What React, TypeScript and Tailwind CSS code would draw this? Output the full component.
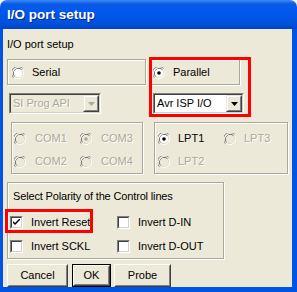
import type { ReactNode } from 'react';

const disabledText = 'text-[#aca899] [text-shadow:1px_1px_0_#fff]';

function Radio({ checked = false, disabled = false }: { checked?: boolean; disabled?: boolean }) {
  return (
    <svg width="12" height="12" viewBox="0 0 12 12" className="shrink-0">
      <circle cx="6" cy="6" r="5.5" fill="none" stroke="#ffffff" strokeWidth="1" />
      <path d="M10.6 1.4 A6.5 6.5 0 0 0 1.4 10.6" fill="none" stroke="#808080" strokeWidth="1" />
      <path d="M9.5 2.5 A5 5 0 0 0 2.5 9.5" fill="none" stroke="#404040" strokeWidth="1" />
      <path d="M2.5 9.5 A5 5 0 0 0 9.5 2.5" fill="none" stroke="#d4d0c8" strokeWidth="1" />
      <circle cx="6" cy="6" r="4.3" fill={disabled ? '#ece9d8' : '#ffffff'} />
      {checked && <circle cx="6" cy="6" r="1.8" fill={disabled ? '#aca899' : '#000000'} />}
    </svg>
  );
}

function Checkbox({ checked = false }: { checked?: boolean }) {
  return (
    <div className="w-[13px] h-[13px] shrink-0 border border-t-[#808080] border-l-[#808080] border-b-white border-r-white">
      <div className="w-full h-full border border-t-[#404040] border-l-[#404040] border-b-[#d4d0c8] border-r-[#d4d0c8] bg-white flex items-center justify-center">
        {checked && (
          <svg width="7" height="7" viewBox="0 0 7 7">
            <path d="M0 2 L0 4 L2 6 L7 1 L7 -1 L2 4 Z" fill="#000" />
          </svg>
        )}
      </div>
    </div>
  );
}

function Group({ className, children }: { className: string; children?: ReactNode }) {
  return (
    <div className={`border border-[#aca899] shadow-[inset_1px_1px_0_#fff,1px_1px_0_#fff] ${className}`}>
      {children}
    </div>
  );
}

function Combo({ value, disabled = false, className }: { value: string; disabled?: boolean; className: string }) {
  return (
    <div className={`h-[21px] border border-t-[#808080] border-l-[#808080] border-b-white border-r-white ${className}`}>
      <div
        className={`h-full flex items-center border border-t-[#404040] border-l-[#404040] border-b-[#d4d0c8] border-r-[#d4d0c8] ${
          disabled ? 'bg-[#ece9d8]' : 'bg-white'
        }`}
      >
        <span className={`flex-1 pl-[2px] leading-[13px] ${disabled ? disabledText : 'text-black'}`}>{value}</span>
        <div className="w-[16px] h-[17px] border border-t-[#ece9d8] border-l-[#ece9d8] border-b-[#404040] border-r-[#404040] bg-[#ece9d8]">
          <div className="w-full h-full border border-t-white border-l-white border-b-[#808080] border-r-[#808080] flex items-center justify-center">
            <svg width="7" height="4" viewBox="0 0 7 4">
              <path d="M0 0 H7 L3.5 4 Z" fill={disabled ? '#aca899' : '#000'} />
            </svg>
          </div>
        </div>
      </div>
    </div>
  );
}

function Button({ label, className, isDefault = false }: { label: string; className: string; isDefault?: boolean }) {
  return (
    <div className={`h-[23px] bg-[#ece9d8] ${isDefault ? 'border border-black' : ''} ${className}`}>
      <div className="h-full border border-t-white border-l-white border-b-[#404040] border-r-[#404040]">
        <div className="h-full flex items-center justify-center border border-t-[#ece9d8] border-l-[#ece9d8] border-b-[#808080] border-r-[#808080] text-black text-[11px]">
          {label}
        </div>
      </div>
    </div>
  );
}

export default function App() {
  return (
    <div className="w-[297px] h-[292px] bg-[#f4f3ee] relative font-['Liberation_Sans',Arial,sans-serif] text-[11px] text-black">
      {/* title bar */}
      <div className="h-[29px] rounded-t-[7px] bg-[linear-gradient(to_bottom,#3b8cf7_0px,#0a5ae6_4px,#0058ee_12px,#0053e0_22px,#0046c8_29px)] flex items-center pl-[7px]">
        <span className="font-bold text-[13.5px] text-white [text-shadow:1px_1px_0_#0a2a8a] pt-[1px]">
          I/O port setup
        </span>
      </div>

      {/* client */}
      <div className="h-[263px] bg-[#ece9d8] border-l-[3px] border-r-[5px] border-b-[5px] border-[#0054e3]">
        <div className="pt-[9px] pl-[4px] leading-[13px]">I/O port setup</div>

        <div className="flex mt-[8px]">
          <div className="ml-[4px] w-[139px]">
            <Group className="h-[26px] flex items-center pl-[4px] pt-[1px]">
              <Radio />
              <span className="ml-[8px]">Serial</span>
            </Group>
            <Combo value="SI Prog API" disabled className="ml-[2px] mt-[8px] w-[92px]" />
          </div>
          <div className="ml-[4px]">
            <Group className="w-[90px] h-[26px] flex items-center pl-[2px] pt-[1px]">
              <Radio checked />
              <span className="ml-[8px]">Parallel</span>
            </Group>
            <Combo value="Avr ISP I/O" className="ml-[3px] mt-[8px] w-[91px]" />
          </div>
        </div>

        <div className="flex mt-[8px]">
          <Group className="ml-[8px] w-[132px] h-[52px] pl-[2px] pt-[9px]">
            <div className="flex items-center h-[13px]">
              <Radio disabled />
              <span className={`ml-[9px] w-[45px] ${disabledText}`}>COM1</span>
              <Radio checked disabled />
              <span className={`ml-[9px] ${disabledText}`}>COM3</span>
            </div>
            <div className="flex items-center h-[13px] mt-[10px]">
              <Radio disabled />
              <span className={`ml-[9px] w-[45px] ${disabledText}`}>COM2</span>
              <Radio disabled />
              <span className={`ml-[9px] ${disabledText}`}>COM4</span>
            </div>
          </Group>
          <Group className="ml-[11px] w-[134px] h-[52px] pl-[3px] pt-[9px]">
            <div className="flex items-center h-[13px]">
              <Radio checked />
              <span className="ml-[8px] w-[46px]">LPT1</span>
              <Radio disabled />
              <span className={`ml-[8px] ${disabledText}`}>LPT3</span>
            </div>
            <div className="flex items-center h-[13px] mt-[10px]">
              <Radio disabled />
              <span className={`ml-[8px] ${disabledText}`}>LPT2</span>
            </div>
          </Group>
        </div>

        <Group className="ml-[4px] mt-[8px] w-[217px] h-[77px] pl-[5px] pt-[6px]">
          <div className="leading-[14px] tracking-[-0.15px]">Select Polarity of the Control lines</div>
          <div className="flex items-center mt-[13px] h-[13px]">
            <div className="-ml-[3px] flex items-center w-[107px]">
              <Checkbox checked />
              <span className="ml-[8px]">Invert Reset</span>
            </div>
            <Checkbox />
            <span className="ml-[8px]">Invert D-IN</span>
          </div>
          <div className="flex items-center mt-[11px] h-[13px]">
            <div className="-ml-[3px] flex items-center w-[107px]">
              <Checkbox />
              <span className="ml-[8px]">Invert SCKL</span>
            </div>
            <Checkbox />
            <span className="ml-[8px]">Invert D-OUT</span>
          </div>
        </Group>

        <div className="flex mt-[5px] ml-[4px]">
          <Button label="Cancel" className="w-[61px]" />
          <Button label="OK" isDefault className="ml-[4px] w-[39px]" />
          <Button label="Probe" className="ml-[3px] w-[57px]" />
        </div>
      </div>

      {/* red annotation boxes */}
      <div className="absolute left-[149px] top-[57px] w-[102px] h-[60px] border-[3px] border-[#ff0000]" />
      <div className="absolute left-[5px] top-[209px] w-[88px] h-[24px] border-[3px] border-[#ff0000]" />
    </div>
  );
}
